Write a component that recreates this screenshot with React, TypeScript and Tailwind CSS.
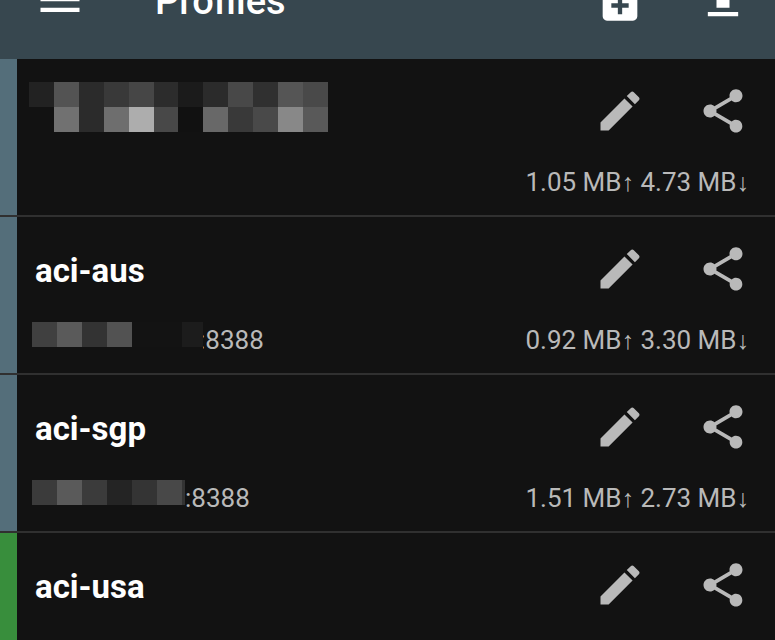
import React from "react";

function Icon({ d, className }: { d: string; className?: string }) {
  return (
    <svg viewBox="0 0 24 24" className={`size-[52px] shrink-0 fill-current ${className ?? ""}`} aria-hidden="true">
      <path d={d} />
    </svg>
  );
}

const MENU = "M3 18h18v-2H3v2zm0-5h18v-2H3v2zm0-7v2h18V6H3z";
const NOTE_ADD =
  "M14 2H6c-1.1 0-1.99.9-1.99 2L4 20c0 1.1.89 2 1.99 2H18c1.1 0 2-.9 2-2V8l-6-6zm2 14h-3v3h-2v-3H8v-2h3v-3h2v3h3v2zm-3-7V3.5L18.5 9H13z";
const UPLOAD = "M9 16h6v-6h4l-7-7-7 7h4zm-4 2h14v2H5z";
const EDIT =
  "M3 17.25V21h3.75L17.81 9.94l-3.75-3.75L3 17.25zM20.71 7.04c.39-.39.39-1.02 0-1.41l-2.34-2.34c-.39-.39-1.02-.39-1.41 0l-1.83 1.83 3.75 3.75 1.83-1.83z";
const SHARE =
  "M18 16.08c-.76 0-1.44.3-1.96.77L8.91 12.7c.05-.23.09-.46.09-.7s-.04-.47-.09-.7l7.05-4.11c.54.5 1.25.81 2.04.81 1.66 0 3-1.34 3-3s-1.34-3-3-3-3 1.34-3 3c0 .24.04.47.09.7L8.04 9.81C7.5 9.31 6.79 9 6 9c-1.66 0-3 1.34-3 3s1.34 3 3 3c.79 0 1.5-.31 2.04-.81l7.12 4.16c-.05.21-.08.43-.08.65 0 1.61 1.31 2.92 2.92 2.92 1.61 0 2.92-1.31 2.92-2.92s-1.31-2.92-2.92-2.92z";

type Profile = {
  name?: string;
  port?: string;
  mask?: string[];
  overlap?: boolean;
  up?: string;
  down?: string;
  active?: boolean;
};

function NameMask() {
  const cells = [
    "bg-[#222222]", "bg-[#535353]", "bg-[#2b2b2b]", "bg-[#393939]", "bg-[#464646]", "bg-[#2c2c2c]",
    "bg-[#1b1b1b]", "bg-[#2b2b2b]", "bg-[#484848]", "bg-[#303030]", "bg-[#555555]", "bg-[#494949]",
    "bg-[#121212]", "bg-[#717171]", "bg-[#2b2b2b]", "bg-[#6e6e6e]", "bg-[#adadad]", "bg-[#484848]",
    "bg-[#111111]", "bg-[#686868]", "bg-[#393939]", "bg-[#494949]", "bg-[#888888]", "bg-[#595959]",
  ];
  return (
    <div className="-ml-1.5 grid w-[299px] grid-cols-12">
      {cells.map((c, i) => (
        <span key={i} className={`h-[25px] ${c}`} />
      ))}
    </div>
  );
}

function HostMask({ cells }: { cells: string[] }) {
  return (
    <span className="-mt-3 flex">
      {cells.map((c, i) => (
        <span key={i} className={`h-[25px] ${c}`} />
      ))}
    </span>
  );
}

const profiles: Profile[] = [
  { up: "1.05 MB", down: "4.73 MB" },
  {
    name: "aci-aus",
    port: ":8388",
    overlap: true,
    up: "0.92 MB",
    down: "3.30 MB",
    mask: [
      "w-[25px] bg-[#404040]",
      "w-[25px] bg-[#5a5a5a]",
      "w-[25px] bg-[#333333]",
      "w-[25px] bg-[#525252]",
      "w-[50px] bg-[#131313]",
      "w-[21px] bg-[#1c1c1c]",
    ],
  },
  {
    name: "aci-sgp",
    port: ":8388",
    up: "1.51 MB",
    down: "2.73 MB",
    mask: [
      "w-[25px] bg-[#3b3b3b]",
      "w-[25px] bg-[#5a5a5a]",
      "w-[25px] bg-[#3b3b3b]",
      "w-[25px] bg-[#242424]",
      "w-[25px] bg-[#343434]",
      "w-[25px] bg-[#484848]",
      "w-[3px] bg-[#333333]",
    ],
  },
  { name: "aci-usa", active: true },
];

function Row({ p }: { p: Profile }) {
  return (
    <li className="flex h-[158px] border-b-2 border-[#303030]">
      <div className={`w-[17px] shrink-0 ${p.active ? "bg-[#388e3c]" : "bg-[#546e7a]"}`} />
      <div className="flex min-w-0 flex-1 flex-col">
        <div className="flex h-[104px] items-center pr-[26px] pl-[18px]">
          <div className="min-w-0 flex-1">
            {p.name ? (
              <h2 className="pt-1 text-[33px] leading-10 font-bold text-white">{p.name}</h2>
            ) : (
              <div className="pb-2">
                <NameMask />
              </div>
            )}
          </div>
          <button type="button" aria-label="Edit" className="mr-[51px]">
            <Icon d={EDIT} />
          </button>
          <button type="button" aria-label="Share">
            <Icon d={SHARE} />
          </button>
        </div>
        <div className="flex h-[38px] items-center pr-[26px] pl-[15px] text-[26px] leading-9">
          {p.mask && <HostMask cells={p.mask} />}
          {p.port && (
            <span className="overflow-hidden">
              <span className={p.overlap ? "-ml-1" : ""}>{p.port}</span>
            </span>
          )}
          {p.up && (
            <span className="ml-auto whitespace-nowrap">
              {p.up}
              <span className="text-[25px]">↑</span> {p.down}
              <span className="text-[25px]">↓</span>
            </span>
          )}
        </div>
      </div>
    </li>
  );
}

export default function App() {
  return (
    <div className="h-screen overflow-hidden bg-[#121212] font-[Roboto,'Noto_Sans',sans-serif] text-[#b9b9b9]">
      <header className="-mt-[61px] flex h-[120px] items-center bg-[#37474f] pr-[26px] pl-[34px] text-white">
        <button type="button" aria-label="Menu">
          <Icon d={MENU} />
        </button>
        <h1 className="ml-[69px] flex-1 pt-1 text-[38px] leading-10 font-medium">Profiles</h1>
        <button type="button" aria-label="Add profile" className="mr-[51px]">
          <Icon d={NOTE_ADD} />
        </button>
        <button type="button" aria-label="Upload">
          <Icon d={UPLOAD} />
        </button>
      </header>
      <ul>
        {profiles.map((p, i) => (
          <Row key={i} p={p} />
        ))}
      </ul>
    </div>
  );
}
